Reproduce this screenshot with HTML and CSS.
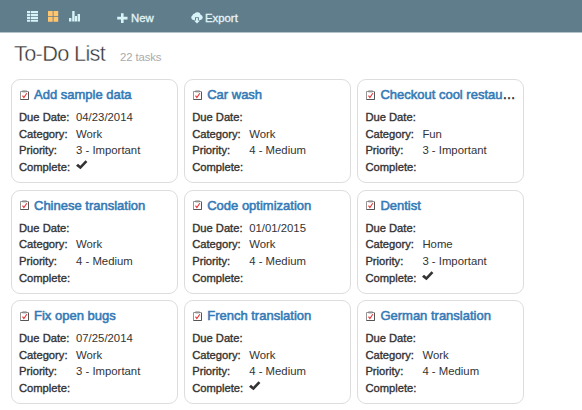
FILE: index.html
```html
<!DOCTYPE html>
<html lang="en">
<head>
<meta charset="utf-8">
<title>To-Do List</title>
<link rel="stylesheet" href="styles.css">
</head>
<body>
<svg class="defs" aria-hidden="true">
  <symbol id="task" viewBox="0 0 10 11"><path d="M.5 1.5h8v8h-8z" fill="#fff" stroke="#888" stroke-width=".9"/><path d="M2.5 .8h4v1.2h-4z" fill="#aaa" stroke="#777" stroke-width=".6"/><path d="M8.5 2v7.5h-8" fill="none" stroke="#555" stroke-width="1"/><path d="M2.5 5.6l1.4 1.9 2.9-4.2" fill="none" stroke="#e83232" stroke-width="1.1"/></symbol>
  <symbol id="check" viewBox="0 0 12 10"><path d="M0 5.8L2 3.7l2.3 2L9.5.2l1.9 1.9L4.5 9.3z" fill="#333"/></symbol>
</svg>
<header class="toolbar">
  <nav class="views">
    <svg width="11" height="11" viewBox="0 0 11 11" fill="#d8f3f8"><path d="M0 0h3v2.2H0zM3.7 0H11v2.2H3.7zM0 2.9h3v2.2H0zM3.7 2.9H11v2.2H3.7zM0 5.8h3V8H0zM3.7 5.8H11V8H3.7zM0 8.7h3v2H0zM3.7 8.7H11v2H3.7z"/></svg>
    <svg width="11" height="11" viewBox="0 0 11 11" fill="#ffc56f"><path d="M0 0h4.7v5H0zM5.5 0h4.7v5H5.5zM0 5.8h4.7v4.9H0zM5.5 5.8h4.7v4.9H5.5z"/></svg>
    <svg width="11" height="11" viewBox="0 0 11 11" fill="#d8f3f8"><path d="M0 7h2.4v3.5H0zM3.2 0h2.4v10.5H3.2zM6 5h2v5.5H6zM8.6 3H11v7.5H8.6z"/></svg>
  </nav>
  <a class="action new"><svg width="11" height="11" viewBox="0 0 11 11"><path d="M4 .2h2.6v3.6h3.9v2.6H6.6V10H4V6.4H.2V3.8H4z" fill="#d8f3f8"/></svg>New</a>
  <a class="action export"><svg width="12" height="12" viewBox="0 0 12 12" fill="#d8f3f8"><path d="M2.5 8A2.5 2.5 0 0 1 1.6 3.3 2.1 2.1 0 0 1 3.7 1.6 3.4 3.4 0 0 1 9.7 2.7 2.7 2.7 0 0 1 9.4 8H7.9V5.2H4V8z"/><path d="M5 6h1.9v2.5H9L6 11.6 3 8.5h2z"/></svg>Export</a>
</header>
<main>
  <div class="heading"><h1>To-Do List</h1><span>22 tasks</span></div>
  <section class="cards" id="cards"></section>
</main>
<script src="cards.js"></script>
</body>
</html>
```
FILE: styles.css
```css
* { box-sizing: border-box; }
body { margin: 0; background: #fff; color: #333; font: 11.35px/16.6px "Liberation Sans", Arial, sans-serif; overflow: hidden; }
.defs { display: none; }
svg { flex: none; }
.toolbar { height: 33px; padding: 0 0 0 27px; background: #607d8b; border-bottom: 1px solid #b4c3ca; display: flex; align-items: flex-start; }
.views { display: flex; gap: 10px; padding-top: 11px; width: 90px; }
.action { display: flex; align-items: center; gap: 4px; height: 12px; margin-top: 12px; color: #e4f5f9; -webkit-text-stroke: .3px #e4f5f9; }
.new { width: 74px; }
.new svg { margin-right: -1px; }
.export { gap: 2px; }
.heading { display: flex; align-items: baseline; height: 46px; padding: 8px 0 0 14px; }
h1 { margin: 0; width: 106px; font: 400 21.8px/26px "Liberation Sans", Arial, sans-serif; letter-spacing: -.7px; white-space: nowrap; -webkit-text-stroke: .4px #fff; }
.heading span { color: #aaa; letter-spacing: -.1px; }
.cards { display: grid; grid-template-columns: repeat(3, 167px); column-gap: 6.2px; row-gap: 6.5px; padding-left: 11px; }
.card { height: 104px; border: 1px solid #ddd; border-radius: 9px; padding: 6px 7px 0; }
.title { display: flex; align-items: center; gap: 4px; height: 18px; margin-bottom: 5.3px; padding-left: 1px; }
.title h2 { margin: 0; font: 400 13px/18px "Liberation Sans", Arial, sans-serif; white-space: nowrap; -webkit-text-stroke: .55px; }
.title a { color: #337ab7; }
dl { margin: 0; display: grid; grid-template-columns: 57px 1fr; grid-auto-rows: 16.6px; }
dt { font-size: 11.2px; -webkit-text-stroke: .35px #333; }
dd { margin: 0; white-space: nowrap; }
dd svg { display: block; margin-top: 1px; }
```
FILE: cards.js
```js
const tasks = [
  ["Add sample data", "04/23/2014", "Work", "3 - Important", true],
  ["Car wash", "", "Work", "4 - Medium", false],
  ["Checkout cool restau", "", "Fun", "3 - Important", false, true],
  ["Chinese translation", "", "Work", "4 - Medium", false],
  ["Code optimization", "01/01/2015", "Work", "4 - Medium", false],
  ["Dentist", "", "Home", "3 - Important", true],
  ["Fix open bugs", "07/25/2014", "Work", "3 - Important", false],
  ["French translation", "", "Work", "4 - Medium", true],
  ["German translation", "", "Work", "4 - Medium", false]
];
document.getElementById("cards").innerHTML = tasks.map(([name, due, category, priority, done, cut]) => `
  <article class="card">
    <div class="title"><svg width="10" height="11"><use href="#task"/></svg><h2><a>${name}</a>${cut ? "…" : ""}</h2></div>
    <dl><dt>Due Date:</dt><dd>${due}</dd><dt>Category:</dt><dd>${category}</dd><dt>Priority:</dt><dd>${priority}</dd>
    <dt>Complete:</dt><dd>${done ? '<svg width="12" height="10"><use href="#check"/></svg>' : ""}</dd></dl>
  </article>`).join("");
```
